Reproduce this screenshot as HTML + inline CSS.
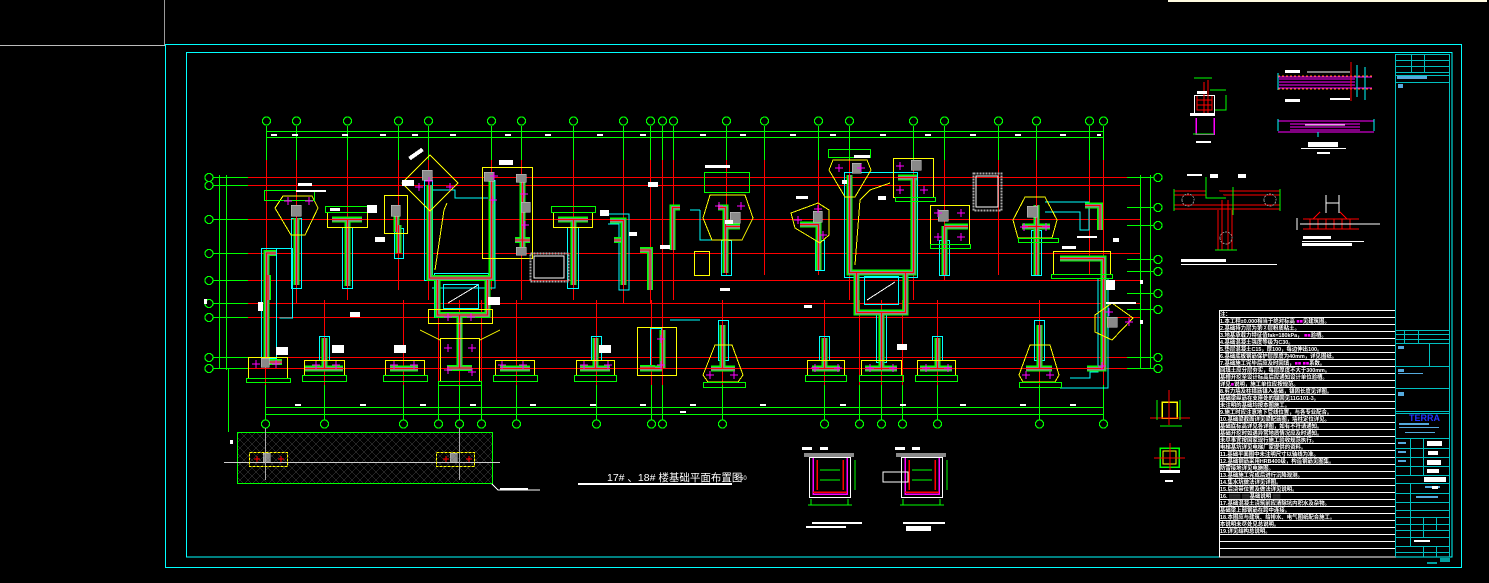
<!DOCTYPE html>
<html><head><meta charset="utf-8"><style>
html,body{margin:0;padding:0;background:#000;}
svg{display:block}
.g{stroke:#00ff00;fill:none}
.r{stroke:#ff0000;fill:none}
.y{stroke:#ffff00;fill:none}
.c{stroke:#00ffff;fill:none}
.m{stroke:#ff00ff;fill:none}
.wg{stroke:#00ff00;stroke-width:6;fill:none}
.wa{stroke:#8a8a8a;stroke-width:3.5;fill:none}
.wr{stroke:#ff0000;stroke-width:1;fill:none}
.n{fill:#fff;font-family:"Liberation Sans","Noto Sans CJK SC",sans-serif;font-size:5.4px;font-weight:bold}
.bub{stroke:#00ff00;fill:#000;stroke-width:1.2}
</style></head><body>
<svg width="1489" height="583" viewBox="0 0 1489 583" xmlns="http://www.w3.org/2000/svg" shape-rendering="crispEdges">
<rect width="1489" height="583" fill="#000"/>
<line x1="164.5" y1="0" x2="164.5" y2="45" stroke="#9a9a9a"/>
<line x1="0" y1="45.5" x2="165" y2="45.5" stroke="#bbb"/>
<rect x="1168" y="0" width="319" height="2" fill="#fffbe0"/>
<rect x="165.5" y="44.5" width="1296" height="523" fill="none" stroke="#00ffff" stroke-width="1.3"/>
<rect x="186.5" y="52.5" width="1265.5" height="504.5" fill="none" stroke="#00ffff" stroke-width="1.3"/>

<g class="g">
<line x1="266" y1="131.5" x2="1103" y2="131.5"/>
<line x1="266" y1="137.5" x2="1103" y2="137.5"/>
<line x1="266" y1="407.5" x2="1103" y2="407.5"/>
<line x1="266" y1="414.5" x2="1103" y2="414.5"/>
<line x1="219.5" y1="175" x2="219.5" y2="368"/>
<line x1="226.5" y1="175" x2="226.5" y2="370"/>
<line x1="228.5" y1="368" x2="228.5" y2="432"/>
<line x1="1140.5" y1="175" x2="1140.5" y2="368"/>
<line x1="1150.5" y1="175" x2="1150.5" y2="368"/>
</g>
<g class="g">
<path d="M266.5 126V160M296.5 126V160M347.5 126V160M398.5 126V160M428.5 126V160M491.5 126V160M521.5 126V160M573.5 126V160M623.5 126V160M650.5 126V160M662.5 126V160M673.5 126V160M726.5 126V160M764.5 126V160M818.5 126V160M849.5 126V160M913.5 126V160M944.5 126V160M998.5 126V160M1036.5 126V160M1089.5 126V160M1103.5 126V160"/>
</g>
<g class="r">
<path d="M266.5 160V300M296.5 160V303M347.5 160V300M398.5 160V290M428.5 160V300M491.5 160V290M521.5 160V300M573.5 160V300M623.5 160V303M650.5 160V303M662.5 160V300M673.5 160V300M726.5 160V275M764.5 160V275M818.5 160V275M849.5 160V300M913.5 160V300M944.5 160V280M998.5 160V275M1036.5 160V275M1089.5 160V275M1103.5 160V300"/>
<path d="M265.5 300V385M324.5 300V385M403.5 300V385M438.5 300V385M459.5 300V385M481.5 300V385M516.5 300V385M596.5 300V385M651.5 300V385M662.5 300V385M722.5 300V385M824.5 300V385M859.5 300V385M881.5 300V385M902.5 300V385M937.5 300V385M1039.5 300V385M1103.5 300V385"/>
<path d="M248 177.5H1140M248 185.5H1140M248 219.5H1140M248 253.5H1140M248 280.5H1140M248 303.5H1140M248 317.5H1140M248 357.5H1140M248 368.5H1140"/>
</g>
<g class="g">
<path d="M265.5 385V420M324.5 385V420M403.5 385V420M438.5 385V420M459.5 385V420M481.5 385V420M516.5 385V420M596.5 385V420M651.5 385V420M662.5 385V420M722.5 385V420M824.5 385V420M859.5 385V420M881.5 385V420M902.5 385V420M937.5 385V420M1039.5 385V420M1103.5 385V420"/>
<path d="M213 177.5H248M213 185.5H248M213 219.5H248M213 253.5H248M213 280.5H248M213 303.5H248M213 317.5H248M213 357.5H248M213 368.5H248"/>
<path d="M1127 177.5H1154M1127 207.5H1154M1127 225.5H1154M1127 259.5H1154M1127 271.5H1154M1127 293.5H1154M1127 309.5H1154M1127 357.5H1154M1127 368.5H1154"/>
</g>
<g class="bub">
<circle cx="266.5" cy="121" r="4"/><circle cx="296.5" cy="121" r="4"/><circle cx="347.5" cy="121" r="4"/><circle cx="398.5" cy="121" r="4"/><circle cx="428.5" cy="121" r="4"/><circle cx="491.5" cy="121" r="4"/><circle cx="521.5" cy="121" r="4"/><circle cx="573.5" cy="121" r="4"/><circle cx="623.5" cy="121" r="4"/><circle cx="650.5" cy="121" r="4"/><circle cx="662.5" cy="121" r="4"/><circle cx="673.5" cy="121" r="4"/><circle cx="726.5" cy="121" r="4"/><circle cx="764.5" cy="121" r="4"/><circle cx="818.5" cy="121" r="4"/><circle cx="849.5" cy="121" r="4"/><circle cx="913.5" cy="121" r="4"/><circle cx="944.5" cy="121" r="4"/><circle cx="998.5" cy="121" r="4"/><circle cx="1036.5" cy="121" r="4"/><circle cx="1089.5" cy="121" r="4"/><circle cx="1103.5" cy="121" r="4"/>
<circle cx="265.5" cy="424" r="4"/><circle cx="324.5" cy="424" r="4"/><circle cx="403.5" cy="424" r="4"/><circle cx="438.5" cy="424" r="4"/><circle cx="459.5" cy="424" r="4"/><circle cx="481.5" cy="424" r="4"/><circle cx="516.5" cy="424" r="4"/><circle cx="596.5" cy="424" r="4"/><circle cx="651.5" cy="424" r="4"/><circle cx="662.5" cy="424" r="4"/><circle cx="722.5" cy="424" r="4"/><circle cx="824.5" cy="424" r="4"/><circle cx="859.5" cy="424" r="4"/><circle cx="881.5" cy="424" r="4"/><circle cx="902.5" cy="424" r="4"/><circle cx="937.5" cy="424" r="4"/><circle cx="1039.5" cy="424" r="4"/><circle cx="1103.5" cy="424" r="4"/>
<circle cx="209" cy="177.5" r="4"/><circle cx="209" cy="185.5" r="4"/><circle cx="209" cy="219.5" r="4"/><circle cx="209" cy="253.5" r="4"/><circle cx="209" cy="280.5" r="4"/><circle cx="209" cy="303.5" r="4"/><circle cx="209" cy="317.5" r="4"/><circle cx="209" cy="357.5" r="4"/><circle cx="209" cy="368.5" r="4"/>
<circle cx="1158" cy="177.5" r="4"/><circle cx="1158" cy="207.5" r="4"/><circle cx="1158" cy="225.5" r="4"/><circle cx="1158" cy="259.5" r="4"/><circle cx="1158" cy="271.5" r="4"/><circle cx="1158" cy="293.5" r="4"/><circle cx="1158" cy="309.5" r="4"/><circle cx="1158" cy="357.5" r="4"/><circle cx="1158" cy="368.5" r="4"/>
</g>

<g class="c">
<rect x="261.5" y="248.5" width="15" height="110"/>
<path d="M261.5 248.5H292.5V318H279.5"/>
<rect x="291.5" y="218.5" width="10" height="70"/>
<rect x="342.5" y="227.5" width="10" height="61"/>
<rect x="394.5" y="228.5" width="9" height="30"/>
<rect x="424.5" y="180.5" width="8" height="100"/>
<path d="M432 190H455V198H488M432 288H495V180"/>
<rect x="434.5" y="273.5" width="54" height="44"/>
<rect x="443.5" y="284.5" width="35" height="24"/>
<rect x="567.5" y="227.5" width="11" height="61"/>
<path d="M608 214H629V290H619V224H608"/>
<rect x="319.5" y="336.5" width="10" height="24"/>
<rect x="591.5" y="336.5" width="10" height="24"/>
<rect x="650.5" y="328.5" width="11" height="40"/>
<rect x="718.5" y="320.5" width="10" height="40"/>
<rect x="819.5" y="336.5" width="10" height="24"/>
<rect x="876.5" y="312.5" width="10" height="50"/>
<rect x="932.5" y="336.5" width="10" height="24"/>
<rect x="1034.5" y="320.5" width="10" height="40"/>
<rect x="844.5" y="172.5" width="73" height="105"/>
<rect x="854.5" y="273.5" width="53" height="41"/>
<rect x="864.5" y="276.5" width="34" height="28"/>
<rect x="721.5" y="240.5" width="10" height="35"/>
<rect x="815.5" y="240.5" width="9" height="30"/>
<rect x="939.5" y="240.5" width="10" height="35"/>
<rect x="1031.5" y="230.5" width="10" height="45"/>
<path d="M1045 202H1089V230H1080V212H1045"/>
<path d="M1098 278V372H1090V378H1070M1108 278V388H1060"/>
<path d="M690 210H700M700 210V240H740M670 320H700"/>
</g>

<defs>
<path id="walls" d="M276 253H266.5V362H282
M296.5 218V285M332 219.5H362M347.5 219.5V286M396.5 205V232M398.5 225V253
M429.5 185V278H491.5V173M437.5 280V315H487.5V280M459.5 315V368H447M459.5 368H472
M522.5 180V255M515 240H530M558 219.5H588M573.5 219.5V285M610 220.5H623.5V285
M305 368.5H343M324.5 338V368M390 368.5H418M500 368.5H530M580 368.5H610M595.5 338V368
M640 368.5H662M662.5 330V368M655 368H640
M711 368.5H735M722.5 325V368M812 368.5H840M824.5 338V368M865 368.5H897M881.5 312V370M920 368.5H952M937.5 338V368M1026 368.5H1052M1039.5 325V368
M1087 368.5H1103.5V258.5H1060M1085 205.5H1100V230
M680 207.5H672.5V250M718 207.5H725.5V273M725 226.5H740M800 224.5H818.5V270
M849.5 175V272.5H913.5V177M898 177.5H917M856.5 272V312.5H905.5V272
M944.5 226.5H968M944.5 226V275M1036.5 205V275M1022 226.5H1050M1103.5 305V368
M268 275V300M640 250H650V290M614 240H621"/>
<clipPath id="nclip"><rect x="1220" y="311" width="175" height="246"/></clipPath>
</defs>
<use href="#walls" class="wg"/>
<use href="#walls" class="wa"/>
<use href="#walls" class="wr"/>

<g class="y">
<polygon points="283,196 312,196 318,208 305,235 291,235 275,208"/>
<rect x="327.5" y="212.5" width="40" height="15"/>
<rect x="384.5" y="195.5" width="23" height="38"/>
<polygon points="430,155 458,183 430,211 402,183"/>
<rect x="482.5" y="167.5" width="50" height="91"/>
<path d="M447 203L444 210L435 270"/>
<rect x="428.5" y="309.5" width="64" height="14"/>
<rect x="440.5" y="338.5" width="39" height="43"/>
<path d="M420 330L440 340M500 330L480 340"/>
<rect x="553.5" y="212.5" width="39" height="15"/>
<rect x="248.5" y="357.5" width="39" height="21"/>
<rect x="304.5" y="360.5" width="40" height="15"/>
<rect x="385.5" y="360.5" width="39" height="15"/>
<rect x="495.5" y="360.5" width="39" height="15"/>
<rect x="576.5" y="360.5" width="38" height="15"/>
<rect x="637.5" y="327.5" width="39" height="48"/>
<polygon points="710,195 745,195 753,218 742,240 712,240 703,218"/>
<rect x="694.5" y="251.5" width="15" height="24"/>
<polygon points="791,213 818,203 829,210 829,235 820,243 795,228"/>
<polygon points="833,160 867,160 871,170 855,197 845,197 829,170"/>
<rect x="893.5" y="158.5" width="40" height="39"/>
<path d="M890 183L870 190L860 200L855 265"/>
<rect x="930.5" y="205.5" width="39" height="39"/>
<polygon points="1025,197 1045,197 1057,220 1052,238 1018,238 1013,220"/>
<rect x="1053.5" y="251.5" width="57" height="23"/>
<polygon points="1095,315 1112,303 1133,318 1112,340 1095,332"/>
<polygon points="715,345 732,345 743,375 738,382 708,382 703,375"/>
<rect x="807.5" y="360.5" width="37" height="15"/>
<rect x="861.5" y="360.5" width="40" height="15"/>
<rect x="917.5" y="360.5" width="38" height="15"/>
<polygon points="1030,345 1050,345 1059,375 1055,382 1023,382 1019,375"/>
</g>

<g class="g">
<rect x="264.5" y="190.5" width="50" height="10"/>
<rect x="246.5" y="378.5" width="44" height="4"/>
<rect x="302.5" y="375.5" width="44" height="6"/>
<rect x="383.5" y="375.5" width="44" height="6"/>
<rect x="493.5" y="375.5" width="44" height="6"/>
<rect x="574.5" y="375.5" width="42" height="6"/>
<rect x="805.5" y="375.5" width="41" height="6"/>
<rect x="859.5" y="375.5" width="44" height="6"/>
<rect x="915.5" y="375.5" width="42" height="6"/>
<rect x="704.5" y="172.5" width="45" height="20"/>
<rect x="828.5" y="149.5" width="42" height="8"/>
<rect x="895.5" y="197.5" width="40" height="4"/>
<rect x="325.5" y="206.5" width="44" height="6"/>
<rect x="551.5" y="206.5" width="44" height="6"/>
<rect x="1051.5" y="274.5" width="61" height="4"/>
<rect x="1018.5" y="238.5" width="40" height="4"/>
<rect x="930.5" y="244.5" width="40" height="4"/>
<rect x="703.5" y="382.5" width="42" height="5"/>
<rect x="1019.5" y="382.5" width="42" height="5"/>
<rect x="438.5" y="381.5" width="43" height="4"/>
</g>

<g fill="none" stroke="#aaa" stroke-dasharray="2 1">
<rect x="530.5" y="253.5" width="38" height="28" stroke-width="2"/>
<rect x="973.5" y="173.5" width="28" height="37" stroke-width="2"/>
</g>
<rect x="534" y="256" width="30" height="22" fill="none" stroke="#fff"/>
<rect x="976" y="176" width="22" height="31" fill="none" stroke="#fff"/>
<path d="M448 303L478 285M867 300L895 282" stroke="#fff"/>

<g fill="#8a8a8a" stroke="#ccc" stroke-width="0.5">
<rect x="291" y="205" width="10" height="11"/><rect x="391" y="205" width="9" height="11"/>
<rect x="422" y="170" width="10" height="10"/><rect x="484" y="172" width="10" height="9"/>
<rect x="516" y="174" width="10" height="8"/><rect x="521" y="202" width="9" height="10"/>
<rect x="516" y="247" width="10" height="8"/><rect x="852" y="163" width="9" height="10"/>
<rect x="911" y="160" width="10" height="10"/><rect x="730" y="212" width="10" height="11"/>
<rect x="813" y="211" width="9" height="11"/><rect x="938" y="210" width="10" height="11"/>
<rect x="1027" y="206" width="10" height="11"/><rect x="1107" y="317" width="10" height="10"/>
<rect x="261" y="358" width="8" height="9"/><rect x="263" y="453" width="7" height="9"/><rect x="450" y="453" width="7" height="9"/>
</g>

<g class="m" stroke-width="1.2">
<path d="M284 201h8M288 197v8M305 201h8M309 197v8M425 181h8M429 177v8M415 187h8M419 183v8M446 187h8M450 183v8M490 176h8M494 172v8M489 200h8M493 196v8M520 194h8M524 190v8M521 225h8M525 221v8M444 317h8M448 313v8M467 317h8M471 313v8M444 348h8M448 344v8M468 348h8M472 344v8M444 370h8M448 366v8M468 372h8M472 368v8M312 365h8M316 361v8M332 365h8M336 361v8M390 365h8M394 361v8M410 365h8M414 361v8M498 365h8M502 361v8M519 365h8M523 361v8M580 365h8M584 361v8M604 365h8M608 361v8M657 365h8M661 361v8M657 339h8M661 335v8M252 364h8M256 360v8M272 364h8M276 360v8"/>
<path d="M835 168h8M839 164v8M857 168h8M861 164v8M896 166h8M900 162v8M896 190h8M900 186v8M920 190h8M924 186v8M934 213h8M938 209v8M957 213h8M961 209v8M934 237h8M938 233v8M957 237h8M961 233v8M715 206h8M719 202v8M737 206h8M741 202v8M814 209h8M818 205v8M794 220h8M798 216v8M819 235h8M823 231v8M1020 227h8M1024 223v8M1042 227h8M1046 223v8M1125 322h8M1129 318v8M1105 312h8M1109 308v8M706 375h8M710 371v8M730 375h8M734 371v8M1022 375h8M1026 371v8M1046 375h8M1050 371v8M811 368h8M815 364v8M834 368h8M838 364v8M866 368h8M870 364v8M889 368h8M893 364v8M922 368h8M926 364v8M944 368h8M948 364v8M1098 366h8M1102 362v8"/>
</g>

<g fill="#fff">
<rect x="298" y="183" width="14" height="3"/><rect x="330" y="208" width="10" height="3"/>
<rect x="296" y="190" width="30" height="2"/><rect x="367" y="205" width="10" height="8"/>
<rect x="375" y="237" width="10" height="5"/><rect x="402" y="180" width="12" height="6"/>
<rect x="408" y="152" width="16" height="4" transform="rotate(-35 416 154)"/>
<rect x="499" y="160" width="14" height="5"/><rect x="488" y="297" width="12" height="8"/>
<rect x="350" y="312" width="10" height="5"/><rect x="276" y="347" width="12" height="8"/>
<rect x="332" y="345" width="12" height="8"/><rect x="394" y="345" width="12" height="8"/>
<rect x="599" y="345" width="12" height="8"/><rect x="258" y="302" width="5" height="9"/>
<rect x="600" y="210" width="9" height="6"/><rect x="629" y="232" width="8" height="4"/>
<rect x="648" y="182" width="10" height="5"/><rect x="660" y="245" width="10" height="4"/>
<rect x="705" y="165" width="25" height="3"/><rect x="725" y="220" width="8" height="4"/>
<rect x="796" y="196" width="12" height="3"/><rect x="842" y="180" width="5" height="4"/>
<rect x="854" y="155" width="16" height="3"/><rect x="878" y="196" width="8" height="4"/>
<rect x="897" y="344" width="10" height="6"/><rect x="1077" y="236" width="20" height="2"/>
<rect x="1106" y="280" width="9" height="10"/><rect x="1106" y="302" width="30" height="2"/>
<rect x="1113" y="238" width="6" height="4"/><rect x="720" y="288" width="10" height="3"/>
<rect x="804" y="305" width="8" height="3"/><rect x="1062" y="246" width="14" height="3"/>
<rect x="1140" y="280" width="3" height="4"/><rect x="1140" y="320" width="3" height="4"/>
<rect x="204" y="299" width="3" height="5"/><rect x="230" y="440" width="3" height="4"/>
<path d="M271 135h6M292 135h6M342 135h6M380 135h6M412 135h6M450 135h6M505 135h6M545 135h6M597 135h6M640 135h6M700 135h6M740 135h6M790 135h6M830 135h6M880 135h6M925 135h6M970 135h6M1015 135h6M1060 135h6M1097 135h4M295 405h6M360 405h6M420 405h6M470 405h6M530 405h6M590 405h6M640 405h6M690 405h6M760 405h6M840 405h6M900 405h6M960 405h6M1020 405h6M1070 405h6M680 412h6" stroke="#fff" stroke-width="2"/>
</g>

<defs><pattern id="hx" width="8" height="8" patternUnits="userSpaceOnUse"><path d="M0 0L8 8M8 0L0 8" stroke="#6a6a6a" stroke-width="0.7"/></pattern></defs>
<rect x="237.5" y="432.5" width="255" height="51" fill="url(#hx)" stroke="#00ff00"/>
<line x1="224" y1="462.5" x2="500" y2="462.5" stroke="#ccc"/>
<line x1="265.5" y1="428" x2="265.5" y2="480" stroke="#aaa"/>
<line x1="459.5" y1="428" x2="459.5" y2="480" stroke="#aaa"/>
<rect x="249.5" y="452.5" width="38" height="14" fill="none" stroke="#ff0" stroke-dasharray="3 1"/>
<rect x="436.5" y="452.5" width="38" height="14" fill="none" stroke="#ff0" stroke-dasharray="3 1"/>
<path d="M254 459h6M257 456v6M278 459h6M281 456v6M443 459h6M446 456v6M466 459h6M469 456v6" stroke="#f00"/>
<path d="M492 484L498 490H540" stroke="#fff"/>
<rect x="500" y="488" width="28" height="2" fill="#fff"/>

<text x="607" y="481" fill="#fff" font-family="Liberation Sans,'Noto Sans CJK SC',sans-serif" font-size="10.5">17# 、18# 楼基础平面布置图</text>
<rect x="578" y="483" width="154" height="2" fill="#fff"/>
<text x="735" y="480" fill="#fff" font-family="Liberation Sans,sans-serif" font-size="6">1:50</text>

<g>
<rect x="804" y="453" width="50" height="4" fill="#8a8a8a"/>
<rect x="809.5" y="457.5" width="41" height="40" fill="none" stroke="#fff"/>
<path d="M813 458V494H847V458" stroke="#f0f" fill="none" stroke-width="1.5"/>
<path d="M817 460V490M843 460V490M813 492H847" stroke="#f00" stroke-width="1.5"/>
<path d="M820 470h20M820 480h20M811 499V505M848 499V505M808 505H852" stroke="#0f0"/>
<rect x="896" y="453" width="50" height="4" fill="#8a8a8a"/>
<rect x="901.5" y="457.5" width="41" height="40" fill="none" stroke="#fff"/>
<path d="M905 458V494H939V458" stroke="#f0f" fill="none" stroke-width="1.5"/>
<path d="M909 460V490M935 460V490M905 492H939" stroke="#f00" stroke-width="1.5"/>
<path d="M912 470h20M912 480h20M903 499V505M940 499V505M900 505H944M855 460V490M947 460V490" stroke="#0f0"/>
<rect x="883" y="472" width="25" height="10" fill="none" stroke="#fff"/>
<rect x="812" y="522" width="50" height="2" fill="#fff"/><rect x="806" y="526" width="40" height="2" fill="#fff"/>
<rect x="903" y="522" width="42" height="2" fill="#fff"/><rect x="906" y="526" width="25" height="5" fill="#fff"/>
<rect x="802" y="447" width="10" height="3" fill="#fff"/><rect x="820" y="447" width="8" height="3" fill="#fff"/>
<rect x="895" y="447" width="10" height="3" fill="#fff"/><rect x="912" y="447" width="8" height="3" fill="#fff"/>
</g>

<g>
<rect x="1194.5" y="95.5" width="20" height="20" fill="none" stroke="#fff"/>
<path d="M1197 96V110H1212V96M1197 100H1212M1197 105H1212" stroke="#f00"/>
<path d="M1204 82V115M1208 80V115" stroke="#f00"/>
<path d="M1196 118V134H1214V118" stroke="#f0f" fill="none" stroke-width="1.5"/>
<path d="M1194 78H1212M1193 134H1214M1226 95V110H1215M1210 90H1226" stroke="#0f0"/>
<rect x="1196" y="141" width="15" height="2" fill="#fff"/><rect x="1190" y="113" width="24" height="3" fill="#fff"/>
<path d="M1278 77H1372M1278 88H1372M1279 79H1355M1279 82H1355M1279 85H1355" stroke="#f0f"/>
<path d="M1278 73V90M1365 67V100M1357 65V97" stroke="#0ff"/>
<path d="M1278 76H1372M1278 89H1372" stroke="#f80" stroke-dasharray="2 2"/>
<path d="M1351 62V101" stroke="#f00"/>
<path d="M1307 72H1350M1305 125H1345" stroke="#fff"/>
<path d="M1278 121H1374M1278 132H1374M1290 124H1360M1290 127H1360M1290 130H1360" stroke="#f0f"/>
<path d="M1278 119V131M1374 119V131M1318 132V137" stroke="#0ff"/>
<rect x="1308" y="142" width="30" height="5" fill="#fff"/><rect x="1301" y="148" width="45" height="1" fill="#fff"/>
<rect x="1317" y="152" width="13" height="2" fill="#fff"/><rect x="1197" y="91" width="10" height="3" fill="#fff"/>
<rect x="1285" y="70" width="15" height="3" fill="#fff"/><rect x="1285" y="99" width="15" height="3" fill="#fff"/><rect x="1330" y="98" width="20" height="2" fill="#fff"/>
<path d="M1174 191H1280M1174 209H1280M1174 195H1280M1174 205H1280M1218 210V250M1232 210V250M1222 200V250M1228 200V250" stroke="#f00" stroke-width="1.2"/>
<path d="M1174 189V211M1280 189V211M1215 250H1237M1206 177V198H1226M1233 187V215" stroke="#0f0"/>
<path d="M1188 200m-6 0a6 6 0 1 0 12 0a6 6 0 1 0-12 0M1270 200m-6 0a6 6 0 1 0 12 0a6 6 0 1 0-12 0M1226 238m-6 0a6 6 0 1 0 12 0a6 6 0 1 0-12 0" stroke="#888" fill="none" stroke-dasharray="2 1"/>
<rect x="1181" y="259" width="45" height="3" fill="#fff"/><rect x="1181" y="264" width="96" height="1" fill="#fff"/>
<rect x="1187" y="174" width="15" height="2" fill="#fff"/><rect x="1210" y="174" width="8" height="4" fill="#fff"/><rect x="1238" y="174" width="8" height="4" fill="#fff"/>
<path d="M1303 219H1359M1303 229H1359M1310 219V229M1318 219V229M1326 219V229M1334 219V229M1342 219V229M1350 219V229M1320 212L1313 219M1340 212L1347 219" stroke="#f00"/>
<path d="M1326 195V213M1339 195V213M1326 203H1339M1297 218V230M1300 224H1380" stroke="#fff"/>
<rect x="1303" y="236" width="28" height="3" fill="#fff"/><rect x="1302" y="241" width="62" height="1" fill="#fff"/><rect x="1302" y="243" width="50" height="3" fill="#fff"/>
<rect x="1162" y="402" width="15" height="16" fill="none" stroke="#ff0" stroke-width="1.5"/>
<path d="M1169 390V425M1160 418H1180M1150 418H1162M1177 418H1190" stroke="#f00"/>
<path d="M1157 400V420M1180 400V420M1160 426H1182" stroke="#0f0"/>
<rect x="1160" y="448" width="19" height="19" fill="none" stroke="#0f0" stroke-width="1.5"/>
<rect x="1163" y="451" width="13" height="13" fill="none" stroke="#ff0" stroke-width="1.3"/>
<path d="M1154 458H1185M1170 443V472" stroke="#f00"/>
<rect x="1160" y="470" width="20" height="3" fill="#fff"/><rect x="1165" y="480" width="8" height="2" fill="#fff"/>
</g>

<g>
<rect x="1219.5" y="310.5" width="176" height="246.5" fill="none" stroke="#fff"/>
<path stroke="#fff" d="M1220 317.5H1395M1220 324.5H1395M1220 331.5H1395M1220 338.5H1395M1220 345.5H1395M1220 352.5H1395M1220 359.5H1395M1220 366.5H1395M1220 373.5H1395M1220 380.5H1395M1220 387.5H1395M1220 394.5H1395M1220 401.5H1395M1220 408.5H1395M1220 415.5H1395M1220 422.5H1395M1220 429.5H1395M1220 436.5H1395M1220 443.5H1395M1220 450.5H1395M1220 457.5H1395M1220 464.5H1395M1220 471.5H1395M1220 478.5H1395M1220 485.5H1395M1220 492.5H1395M1220 499.5H1395M1220 506.5H1395M1220 513.5H1395M1220 520.5H1395M1220 527.5H1395M1220 534.5H1395M1220 541.5H1395M1220 548.5H1395"/>
<g clip-path="url(#nclip)">
<text class="n" x="1220" y="316">注：</text>
<text class="n" x="1220" y="323">1.本工程±0.000相当于绝对标高 <tspan fill="#f0f">■■</tspan>见建筑图。</text>
<text class="n" x="1220" y="330">2.基础持力层为第②层粉质粘土。</text>
<text class="n" x="1220" y="337">3.地基承载力特征值fak=180kPa， <tspan fill="#f0f">■■</tspan>验槽。</text>
<text class="n" x="1220" y="344">4.基础混凝土强度等级为C30。</text>
<text class="n" x="1220" y="351">5.垫层混凝土C15，厚100，每边伸出100。</text>
<text class="n" x="1220" y="358">6.基础底板钢筋保护层厚度为40mm，详见图纸。</text>
<text class="n" x="1220" y="365">7.基础施工完毕后应及时回填，<tspan fill="#f0f">■■</tspan> <tspan fill="#f0f">■■</tspan>系数。</text>
<text class="n" x="1220" y="372">  回填土应分层夯实，每层厚度不大于300mm。</text>
<text class="n" x="1220" y="379">  基槽开挖至设计标高后应通知设计单位验槽。</text>
<text class="n" x="1220" y="386">  详见<tspan fill="#f0f">■</tspan>说明，施工单位应按规范。</text>
<text class="n" x="1220" y="393">8.剪力墙及柱插筋锚入基础，锚固长度见详图。</text>
<text class="n" x="1220" y="400">  基础梁纵筋在支座处的锚固见11G101-3。</text>
<text class="n" x="1220" y="407">  未注明的基础均按本图施工。</text>
<text class="n" x="1220" y="414">9.施工时应注意地下管线位置，与各专业配合。</text>
<text class="n" x="1220" y="421">10.基础梁截面详见梁配筋图，墙柱定位详见。</text>
<text class="n" x="1220" y="428">  基础底标高详见各详图，如有不符请通知。</text>
<text class="n" x="1220" y="435">  基础开挖时如遇异常地质情况应及时通知。</text>
<text class="n" x="1220" y="442">  未尽事宜按国家现行施工验收规范执行。</text>
<text class="n" x="1220" y="449">  电梯基坑详见电梯厂家提供的资料。</text>
<text class="n" x="1220" y="456">11.基础平面图中未注明尺寸以轴线为准。</text>
<text class="n" x="1220" y="463">12.基础钢筋采用HRB400级，构造钢筋见图集。</text>
<text class="n" x="1220" y="470">  防雷接地详见电施图。</text>
<text class="n" x="1220" y="477">13.基础施工完成后进行沉降观测。</text>
<text class="n" x="1220" y="484">14.集水坑做法详见详图。</text>
<text class="n" x="1220" y="491">15.后浇带位置及做法详见说明。</text>
<text class="n" x="1220" y="498">16.  <tspan fill="#888">▒▒▒</tspan> <tspan fill="#888">▒▒</tspan>基础说明  <tspan fill="#888">▒▒</tspan></text>
<text class="n" x="1220" y="505">17.基础混凝土浇筑前应清除坑内积水及杂物。</text>
<text class="n" x="1220" y="512">  基础梁上部钢筋在跨中连接。</text>
<text class="n" x="1220" y="519">18.本图应与建筑、给排水、电气图纸配合施工。</text>
<text class="n" x="1220" y="526">  本说明未尽处见总说明。</text>
<text class="n" x="1220" y="533">19.详见结构总说明。</text>
</g>
</g>

<g stroke="#00c0c0" fill="none" stroke-width="1.2">
<path d="M1395.5 54V557M1449.5 54V557"/>
<path d="M1395 54.5H1450M1395 60.5H1450M1395 66.5H1450M1395 72.5H1450M1395 75.5H1450M1395 82.5H1450M1411.5 54V72M1424.5 54V72"/>
<path d="M1395 330.5H1450M1395 334.5H1450M1395 339.5H1450M1395 343.5H1450M1395 366.5H1450M1395 388.5H1450M1395 411.5H1450M1395 413.5H1450M1395 438.5H1450M1395 448.5H1450M1395 457.5H1450M1395 466.5H1450M1395 475.5H1450M1395 483.5H1450M1395 493.5H1450M1395 502.5H1450M1395 510.5H1450M1395 517.5H1450M1395 524.5H1450M1395 530.5H1450M1395 537.5H1450M1395 546.5H1450M1395 552.5H1450"/>
<path d="M1429.5 343V366M1404.5 330V343M1418.5 330V343M1410.5 438V475M1423.5 438V475M1410.5 483V546M1423.5 517V537M1436.5 517V530M1423.5 546V557M1436.5 546V557"/>
</g>
<g fill="#5ad">
<rect x="1397" y="76" width="30" height="3"/><rect x="1398" y="84" width="5" height="4"/>
<rect x="1398" y="346" width="6" height="3"/><rect x="1398" y="369" width="6" height="3"/><rect x="1398" y="373" width="25" height="1"/>
<rect x="1398" y="392" width="6" height="4"/>
<rect x="1398" y="442" width="8" height="2"/><rect x="1398" y="451" width="8" height="2"/><rect x="1398" y="460" width="8" height="2"/>
<rect x="1425" y="486" width="15" height="2"/><rect x="1416" y="496" width="22" height="2"/>
</g>
<text x="1409" y="421" fill="#2233ff" font-family="Liberation Sans,sans-serif" font-size="9" font-weight="bold">TERRA</text>
<rect x="1399" y="423" width="30" height="2" fill="#5ad"/><rect x="1399" y="427" width="40" height="1" fill="#5ad"/><rect x="1405" y="432" width="30" height="1" fill="#5ad"/>
<g fill="#fff"><rect x="1427" y="441" width="15" height="5"/><rect x="1428" y="451" width="10" height="4"/><rect x="1427" y="460" width="14" height="5"/><rect x="1427" y="469" width="12" height="4"/><rect x="1424" y="477" width="22" height="5"/><rect x="1432" y="486" width="6" height="3"/><rect x="1414" y="540" width="16" height="2"/></g>
<rect x="1440" y="558" width="10" height="4" fill="#00a0a0"/><rect x="1427" y="562" width="10" height="2" fill="#00a0a0"/>
</svg>
</body></html>
